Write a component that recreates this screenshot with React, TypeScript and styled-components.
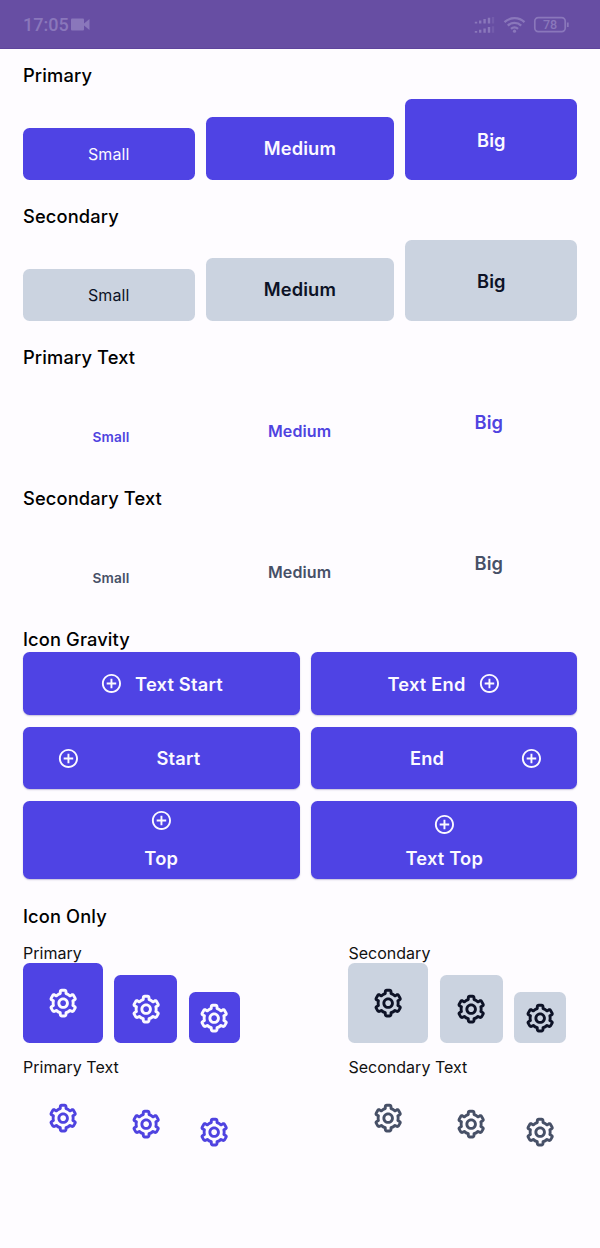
import React from "react";
import styled, { createGlobalStyle } from "styled-components";
import { BiCog } from "react-icons/bi";
import { MdAddCircleOutline } from "react-icons/md";

const Global = createGlobalStyle`
  * { box-sizing: border-box; }
  body { margin: 0; background: #fefcff; font-family: Inter, sans-serif; color: #000; }
`;

type Tone = "primary" | "secondary" | "primaryText" | "secondaryText";
type Size = "small" | "medium" | "big";

const tones: Record<Tone, { bg: string; fg: string }> = {
  primary: { bg: "#4f43e4", fg: "#fbf9ff" },
  secondary: { bg: "#cbd3e0", fg: "#0d1226" },
  primaryText: { bg: "transparent", fg: "#4f43e0" },
  secondaryText: { bg: "transparent", fg: "#475067" },
};
const heights: Record<Size, number> = { small: 51.4, medium: 62.9, big: 80.1 };
const iconHeights: Record<Size, number> = { small: 51.3, medium: 68.5, big: 80 };

const Screen = styled.div`
  min-height: 1248px;
`;

const StatusBar = styled.header`
  height: 49px;
  padding: 1px 30px 0 23px;
  display: flex;
  align-items: center;
  justify-content: space-between;
  background: #674ea3;
  border-bottom: 1px solid #5e449c;
  color: #8a77bb;
`;

const StatusGroup = styled.div`
  display: flex;
  align-items: center;
  gap: 2px;
`;

const Clock = styled.span`
  font: 500 18px/20px Roboto, sans-serif;
`;

const StatusIcons = styled.svg`
  display: block;
`;

const BatteryText = styled.text`
  font: 500 12.5px Roboto, sans-serif;
`;

const Content = styled.main`
  padding: 13.4px 22.6px 0 23px;
`;

const Heading = styled.h2`
  margin: 0;
  height: 26px;
  font-size: 18.3px;
  line-height: 26px;
  font-weight: 550;
  letter-spacing: 0.13px;
`;

const Section = styled.section`
  height: 141px;
`;

const ButtonRow = styled.div<{ $columns: string }>`
  display: grid;
  grid-template-columns: ${(p) => p.$columns};
  gap: 11.4px;
  align-items: end;
  margin-top: 11.1px;
`;

const Button = styled.button<{ $tone: Tone; $size: Size; $fontSize: number; $weight: number; $drop?: number }>`
  height: ${(p) => heights[p.$size]}px;
  border: 0;
  border-radius: 6.5px;
  padding: ${(p) => p.$drop ?? 0}px 0 0;
  background: ${(p) => tones[p.$tone].bg};
  color: ${(p) => tones[p.$tone].fg};
  font-family: inherit;
  font-size: ${(p) => p.$fontSize}px;
  font-weight: ${(p) => p.$weight};
  letter-spacing: 0.13px;
`;

const GravityGrid = styled.div`
  display: grid;
  grid-template-columns: 276.5px 1fr;
  grid-template-rows: 62.7px 62.7px 78px;
  gap: 11.6px;
  margin-bottom: 24px;
`;

const GravityButton = styled.button<{ $vertical?: boolean; $spread?: boolean; $gap: number; $top?: number; $bottom?: number }>`
  display: flex;
  flex-direction: ${(p) => (p.$vertical ? "column" : "row")};
  align-items: center;
  justify-content: center;
  gap: ${(p) => p.$gap}px;
  padding: ${(p) => (p.$spread ? "0 34.3px" : `${p.$top ?? 0}px 0 ${p.$bottom ?? 0}px`)};
  border: 0;
  border-radius: 6.5px;
  background: ${tones.primary.bg};
  color: ${tones.primary.fg};
  box-shadow: 0 1px 1.5px rgba(70, 60, 130, 0.3);
  font: 600 18.3px/22px Inter, sans-serif;
  letter-spacing: 0.2px;

  svg { flex: none; }
`;

const GrowingLabel = styled.span`
  flex: 1;
  text-align: center;
`;

const IconColumns = styled.div`
  display: grid;
  grid-template-columns: 325.4px 1fr;
  row-gap: 12px;
  margin-top: 11.6px;
`;

const IconLabel = styled.div`
  height: 22.8px;
  font-size: 16px;
  line-height: 24px;
  letter-spacing: 0.02px;
  color: #111;
`;

const IconRow = styled.div`
  display: flex;
  align-items: flex-end;
  gap: 11.4px;
`;

const IconButton = styled.button<{ $tone: Tone; $size: Size }>`
  display: grid;
  place-items: center;
  width: ${(p) => heights[p.$size]}px;
  height: ${(p) => iconHeights[p.$size]}px;
  padding: 0;
  border: 0;
  border-radius: 6.5px;
  background: ${(p) => tones[p.$tone].bg};
  color: ${(p) => tones[p.$tone].fg};
`;

const ButtonSection = ({ title, tone }: { title: string; tone: Tone }) => {
  const text = tone === "primaryText" || tone === "secondaryText";
  const drop = text ? 1.6 : 0;
  return (
    <Section>
      <Heading>{title}</Heading>
      <ButtonRow $columns={text ? "176px 178.5px 1fr" : "171.5px 188px 1fr"}>
        <Button $tone={tone} $size="small" $fontSize={text ? 13.7 : 16} $weight={text ? 600 : 400} $drop={drop}>Small</Button>
        <Button $tone={tone} $size="medium" $fontSize={text ? 16 : 18.3} $weight={600} $drop={drop}>Medium</Button>
        <Button $tone={tone} $size="big" $fontSize={18.3} $weight={600}>Big</Button>
      </ButtonRow>
    </Section>
  );
};

const Plus = () => <MdAddCircleOutline size={22.9} />;

const iconGroups: { title: string; tone: Tone }[] = [
  { title: "Primary", tone: "primary" },
  { title: "Secondary", tone: "secondary" },
  { title: "Primary Text", tone: "primaryText" },
  { title: "Secondary Text", tone: "secondaryText" },
];
const iconSizes: Size[] = ["big", "medium", "small"];

export default function App() {
  return (
    <Screen>
      <Global />
      <StatusBar>
        <StatusGroup>
          <Clock>17:05</Clock>
          <StatusIcons width="19" height="13" viewBox="0 0 19 13" fill="currentColor">
            <rect x="0" y="0.5" width="13" height="12" rx="1" />
            <path d="M13 5.5 18.5 1v11L13 7.5z" />
          </StatusIcons>
        </StatusGroup>
        <StatusIcons width="96" height="20" viewBox="0 0 96 20" fill="none" stroke="currentColor">
          <g strokeWidth="2.4">
            <path d="M2 8.5v-1.8M6.2 8.5v-3M10.6 8.5v-4.4M15 8.5v-5.8" />
            <path d="M2 17.8v-1.8M6.2 17.8v-3M10.6 17.8v-4.4M15 17.8v-5.8" />
            <path d="M19 8.5v-6.5M19 17.8v-6.5" opacity="0.35" />
          </g>
          <g strokeWidth="2.3">
            <path d="M30.5 7.2a14.5 14.5 0 0 1 20 0M33.8 10.6a9.8 9.8 0 0 1 13.4 0M37 13.8a5.2 5.2 0 0 1 7 0" />
            <circle cx="40.5" cy="16.2" r="1.6" fill="currentColor" stroke="none" />
          </g>
          <rect x="60.8" y="2.6" width="30.4" height="14" rx="3.5" strokeWidth="1.7" />
          <path d="M93.8 7.5v4.5" strokeWidth="1.8" />
          <BatteryText x="76" y="14.2" textAnchor="middle" fill="currentColor" stroke="none">78</BatteryText>
        </StatusIcons>
      </StatusBar>
      <Content>
        <ButtonSection title="Primary" tone="primary" />
        <ButtonSection title="Secondary" tone="secondary" />
        <ButtonSection title="Primary Text" tone="primaryText" />
        <ButtonSection title="Secondary Text" tone="secondaryText" />
        <Heading>Icon Gravity</Heading>
        <GravityGrid>
          <GravityButton $gap={12.5}><Plus />Text Start</GravityButton>
          <GravityButton $gap={12.5}>Text End<Plus /></GravityButton>
          <GravityButton $gap={11.5} $spread><Plus /><GrowingLabel>Start</GrowingLabel></GravityButton>
          <GravityButton $gap={11.5} $spread><GrowingLabel>End</GrowingLabel><Plus /></GravityButton>
          <GravityButton $gap={14.5} $vertical $bottom={1.6}><Plus />Top</GravityButton>
          <GravityButton $gap={10.5} $vertical $top={2.2}><Plus />Text Top</GravityButton>
        </GravityGrid>
        <Heading>Icon Only</Heading>
        <IconColumns>
          {iconGroups.map(({ title, tone }) => (
            <div key={title}>
              <IconLabel>{title}</IconLabel>
              <IconRow>
                {iconSizes.map((size) => (
                  <IconButton key={size} $tone={tone} $size={size} aria-label={title + " " + size}>
                    <BiCog size={34.3} />
                  </IconButton>
                ))}
              </IconRow>
            </div>
          ))}
        </IconColumns>
      </Content>
    </Screen>
  );
}
